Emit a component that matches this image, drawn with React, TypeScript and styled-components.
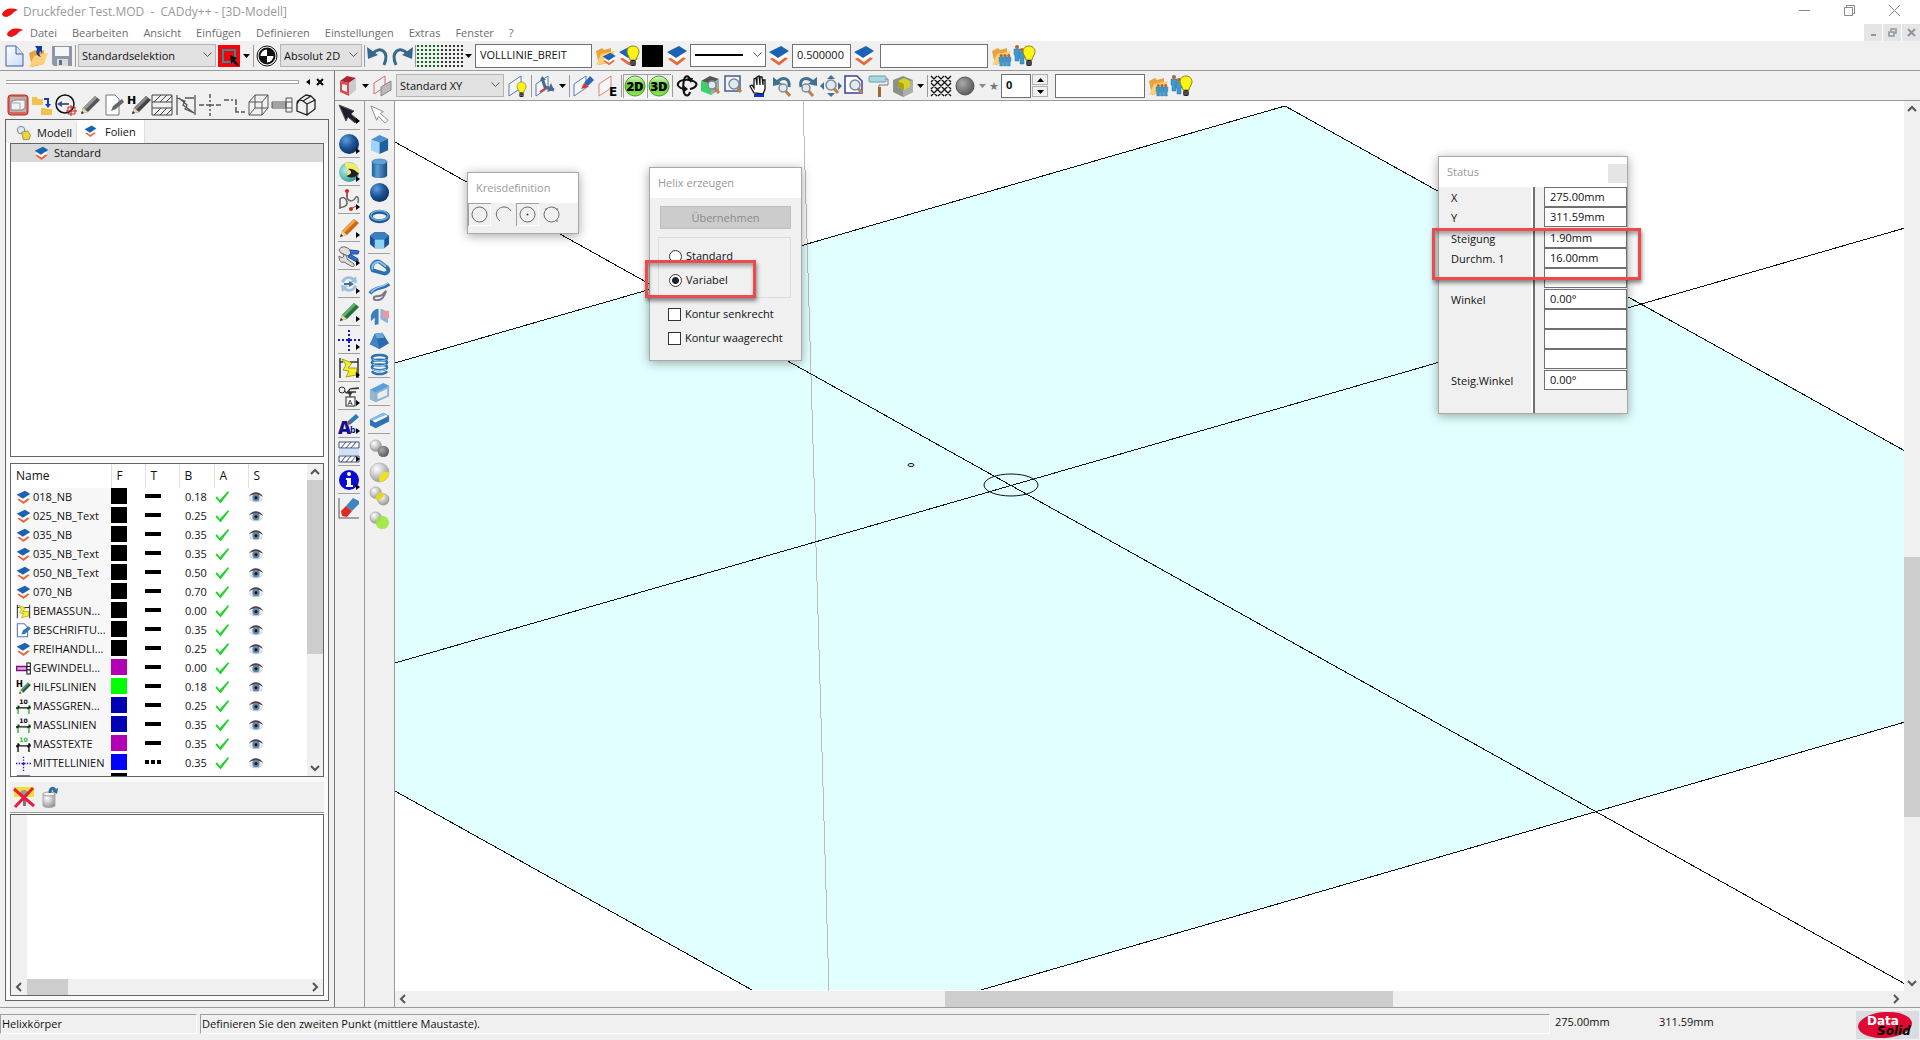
import React from 'react';
import styled, { createGlobalStyle, css } from 'styled-components';

const GlobalStyle = createGlobalStyle`
  * { box-sizing: border-box; }
  html, body { margin: 0; padding: 0; }
  body, button, input, select, table { font-family: 'Open Sans', 'Noto Sans', sans-serif; font-size: 11px; line-height: 16px; color: #111; }
  button { border: 0; padding: 0; background: none; }
  svg { display: block; flex: none; overflow: visible; }
`;

/* ---------- drawings ---------- */

const K = '#111';
const Layers = () => (
  <>
    <path d="M2 14 L7 11.500 L11 14 L15 11.500 L20 13.500 L11 20.500 Z" fill="#e8673c" />
    <path d="M2 11 L11 6 L20 10 L11 17 Z" fill="#fff" />
    <path d="M1 7 L13 1 L21 6 L10 13 Z" fill="#1c62b4" />
  </>
);
const Folder = () => (
  <>
    <path d="M2 6 L8 3 L10 5 L17 3 L17 17 L5 20 Z" fill="#e8a33c" />
    <path d="M2 20 L7 9 L21 6 L17 17 Z" fill="#fbd07a" />
  </>
);
const Bulb = ({ x = 0, y = 0 }: { x?: number; y?: number }) => (
  <g transform={`translate(${x} ${y})`}>
    <path d="M6 0 C1 0 0 4 0 6 C0 9 3 11 3 14 H9 C9 11 12 9 12 6 C12 4 11 0 6 0Z" fill="#fbf315" stroke="#8b8a10" />
    <rect x="3" y="14" width="6" height="6" rx="2" fill="#222" />
    <path d="M3 16H9M3 18H9" stroke="#999" strokeWidth=".7" />
  </g>
);
const People = ({ x = 0, y = 0 }: { x?: number; y?: number }) => (
  <g transform={`translate(${x} ${y})`}>
    <circle cx="3" cy="2" r="2" fill="#b5622e" />
    <path d="M0 4H6V10H5V16H1V10H0Z" fill="#4097cc" stroke="#2b77a8" strokeWidth=".5" />
  </g>
);
const Pencil = ({ c, d }: { c: string; d: string }) => (
  <>
    <path d="M2 20 L4 14 L16 2 L21 6 L9 18 Z" fill={c} />
    <path d="M4 14 L16 2 L18 4 L6 16Z" fill={d} />
    <path d="M2 20 L4 14 L9 18Z" fill="#e9d7b8" />
    <path d="M2 20 L3 17 L5 19Z" fill="#222" />
  </>
);
const Glass = ({ x = 0, y = 0, r = 5 }: { x?: number; y?: number; r?: number }) => (
  <g transform={`translate(${x} ${y})`}>
    <path d={`M${r} ${r} L${r + 7} ${r + 8}`} stroke="#b9824d" strokeWidth="3" />
    <circle cx={r} cy={r} r={r} fill="#dfe9f2" stroke="#7d8a96" strokeWidth="1.500" />
  </g>
);
const PlaneShape = ({ c = '#5a78b4' }: { c?: string }) => (
  <path d="M2 9 L14 1 V13 L2 21 Z" fill="#f8f8f8" stroke={c} />
);

const art: Record<string, React.ReactNode> = {
  newDoc: <><path d="M3 1H13L20 9V21H3Z" fill="url(#paper)" stroke="#3d5f9f" /><path d="M13 1V9H20" fill="#d5e4fb" stroke="#3d5f9f" /></>,
  open: <><g transform="translate(0 2)"><Folder /></g><path d="M8 1H15V8L13 6C12 8 12 10 14 12C10 11 8 8 10 4Z" fill="#123f9d" /></>,
  save: <><path d="M1 1H21V21H3L1 19Z" fill="#8e98a4" /><rect x="4" y="2" width="14" height="9" fill="#f4f6f8" /><rect x="6" y="14" width="11" height="7" fill="#d6dbe0" /><rect x="8" y="15" width="3" height="5" fill="#66707c" /></>,
  redSel: <><rect width="22" height="22" fill="#fb0007" /><rect x="5" y="5" width="12" height="12" fill="none" stroke="#2e8f93" strokeWidth="2" /><path d="M12 10L19 13L17 15L21 20L19 21L15 17L13 19Z" fill={K} /></>,
  origin: <><circle cx="11" cy="11" r="10" fill="#fff" stroke={K} /><circle cx="11" cy="11" r="7.500" fill="#fff" stroke={K} strokeWidth="2" /><path d="M11 11V3.500A7.500 7.500 0 0 1 18.500 11ZM11 11V18.500A7.500 7.500 0 0 1 3.500 11Z" fill={K} /></>,
  undo: <><path d="M6 8C13 1 23 6 17 20" fill="none" stroke="#36698c" strokeWidth="3" /><path d="M0 2L1 14L11 10Z" fill="#36698c" /></>,
  redo: <><path d="M16 8C9 1 -1 6 5 20" fill="none" stroke="#36698c" strokeWidth="3" /><path d="M22 2L21 14L11 10Z" fill="#36698c" /></>,
  layers: <Layers />,
  folderLayers: <><Folder /><g transform="translate(8 7) scale(.65)"><Layers /></g></>,
  layersBulb: <><Layers /><Bulb x={9} y={1} /></>,
  black: <rect x="0" y="0" width="21" height="22" fill="#000" />,
  folderPeople: <><Folder /><g transform="translate(9 9) scale(.75)"><People /><People x={5} /><People x={10} /></g></>,
  peopleBulb: <><People /><People x={5} y={3} /><Bulb x={9} y={1} /></>,

  redCube: <><path d="M3 6L10 1L19 3L12 8Z" fill="#b3222a" /><path d="M3 6L12 8V21L3 17Z" fill="#d84a50" /><path d="M5 9L10 10V17L5 15Z" fill="#eee" /><path d="M12 8L19 3V15L12 21Z" fill="#c9cccc" /></>,
  planes: <><path d="M2 8L13 1V12L2 19Z" fill="none" stroke="#d66" /><path d="M9 12L19 6V15L9 21Z" fill="#bbb" stroke="#888" /></>,
  planeBulb: <><PlaneShape /><g transform="translate(10 7) scale(.75)"><Bulb /></g></>,
  planeAxes: <><PlaneShape /><path d="M8 3L11 12L20 15" stroke="#456c8e" strokeWidth="3" fill="none" /><path d="M17 8L20 15L13 17ZM6 6L8 1L12 5Z" fill="#456c8e" /><path d="M12 13L6 17" stroke="#d33" strokeWidth="2" /></>,
  planePen: <><PlaneShape /><path d="M9 14L12 8L17 12Z" fill="#d33" /><path d="M12 8L18 1L22 5L16 11Z" fill="#2c63b5" /></>,
  planeE: <><PlaneShape c="#df8080" /><text x="12" y="21" fontSize="12" fontWeight="900" fontFamily="DejaVu Sans, sans-serif">E</text></>,
  b2d: <><circle cx="11" cy="11" r="10" fill="url(#green)" stroke="#4c9b28" /><text x="11" y="16" fontSize="13" fontWeight="800" textAnchor="middle" fontFamily="Open Sans, sans-serif">2D</text></>,
  b3d: <><circle cx="11" cy="11" r="10" fill="url(#green)" stroke="#4c9b28" /><text x="11" y="16" fontSize="13" fontWeight="800" textAnchor="middle" fontFamily="Open Sans, sans-serif">3D</text></>,
  orbit: <><path d="M14 14C20 13 22 9 19 7C15 4 6 4 3 7C0 10 3 13 8 14" fill="none" stroke={K} strokeWidth="2" /><path d="M14 5C13 0 9 0 8 5C7 10 7 15 8 18C10 22 13 21 14 17" fill="none" stroke={K} strokeWidth="2" /><path d="M7 10L12 14L7 18ZM11 3L17 3L15 8Z" fill={K} /></>,
  zoomCube: <><path d="M1 6L10 1L19 4L11 9Z" fill="#555" /><path d="M1 6L11 9V20L1 16Z" fill="#39d465" /><path d="M11 9L19 4V15L11 20Z" fill="#9aa" /><Glass x={8} y={6} r={4} /></>,
  zoomWin: <><rect x="1" y="1" width="15" height="15" fill="#f4f4f4" stroke="#445b94" strokeWidth="1.500" /><Glass x={5} y={4} r={5} /></>,
  hand: <><path d="M6 18L2 11L4 10L6 13V4L8 3L9 10V2L11 1L12 10V2L14 2L15 10V5L17 5V14L15 19Z" fill="#fff" stroke={K} strokeWidth="1.300" /><rect x="6" y="19" width="10" height="3" fill="#1033c8" /></>,
  zoomUndo: <><path d="M5 7C11 1 18 3 17 12" fill="none" stroke="#42718f" strokeWidth="3" /><path d="M1 2V11L10 9Z" fill="#42718f" /><Glass x={7} y={9} r={4} /></>,
  zoomRedo: <><path d="M17 7C11 1 3 3 5 12" fill="none" stroke="#42718f" strokeWidth="3" /><path d="M21 2V11L12 9Z" fill="#42718f" /><Glass x={6} y={9} r={4} /></>,
  zoomAll: <><path d="M11 0L15 4H7ZM11 22L7 18H15ZM0 11L4 7V15ZM22 11L18 7V15Z" fill="#42718f" /><Glass x={6} y={5} r={5} /></>,
  zoomPage: <><path d="M1 1H13L18 6V18H1Z" fill="#fff" stroke="#3b3f95" strokeWidth="1.500" /><Glass x={6} y={5} r={5} /></>,
  roller: <><rect x="1" y="1" width="17" height="6" rx="1" fill="#a7d9de" stroke="#6b9da5" /><path d="M18 4H20V10H11V13" fill="none" stroke="#777" /><path d="M10 12H13V22H10Z" fill="#9b6a3a" /></>,
  boxYellow: <><path d="M1 5L11 1L21 5V17L11 22L1 17Z" fill="#8b918b" /><path d="M11 9L21 5V17L11 22Z" fill="#aab0aa" /><path d="M6 6L12 3L18 6V12L12 15L6 12Z" fill="#d8d022" /><path d="M6 6L12 9V15L6 12Z" fill="#a9a31c" /></>,
  hatch: <><path d="M1 1L21 21M1 8L14 21M1 15L7 21M8 1L21 14M15 1L21 7M21 1L1 21M14 1L1 14M7 1L1 7M21 8L8 21M21 15L15 21" stroke={K} strokeWidth="1.300" /></>,
  graySphere: <circle cx="11" cy="11" r="9" fill="url(#grayBall)" stroke="#555" />,

  dRed: <><rect x="1" y="1" width="20" height="20" rx="3" fill="#d9655c" stroke="#b33028" /><rect x="3" y="3" width="16" height="15" fill="#bdb1af" /><path d="M4 8L8 6H18V14L15 16H4Z" fill="#f2f2f2" stroke="#888" /><path d="M4 9H13V16" fill="none" stroke="#aaa" /></>,
  dTree: <><path d="M1 3H6L7 5H12V11H1Z" fill="#efc34c" /><path d="M10 14H14L15 15H21V21H10Z" fill="#efc34c" /><path d="M13 5H17V11" fill="none" stroke="#1b35c8" strokeWidth="2" /><path d="M14 10H20L17 14Z" fill="#1b35c8" /></>,
  dCircle: <><circle cx="10" cy="10" r="9" fill="none" stroke={K} strokeWidth="1.500" /><path d="M3 10H14" stroke="#333" strokeWidth="1.500" /><path d="M2 10L7 7V13Z" fill="#2355b0" /><path d="M13 13H20V20H13ZM16 11V22M11 17H22" stroke="#c22" fill="none" /></>,
  dPencil: <Pencil c="#555" d="#999" />,
  dNote: <><path d="M3 1H12L16 5V21H3Z" fill="#fff" stroke="#777" /><path d="M8 17L10 12L19 5L21 8L13 15Z" fill="#666" /></>,
  dH: <><g transform="translate(3 0)"><Pencil c="#444" d="#888" /></g><text x="0" y="10" fontSize="11" fontWeight="900" fontFamily="DejaVu Sans, sans-serif">H</text></>,
  dHatch: <path d="M1 1H21V21H1ZM1 8H21M1 14H21M3 8L10 1M9 8L16 1M15 8L21 2M3 21L10 14M9 21L16 14M15 21L21 15" fill="none" stroke="#444" />,
  dBolt: <path d="M2 1V21M20 1V21M2 4L10 7L8 11L19 19M10 4H19M19 19L10 15L12 11L4 4" fill="none" stroke="#555" strokeWidth="1.300" />,
  dCross: <path d="M11 0V4M11 6V8M11 10V13M11 15V17M11 19V22M0 11H5M7 11H9M13 11H15M17 11H22M9 11H13" stroke="#555" strokeWidth="1.500" />,
  dDash: <path d="M1 6H6M8 6H10M12 6H13V11M13 13V18H16M18 18H22" fill="none" stroke="#555" strokeWidth="1.500" />,
  dBox: <path d="M2 8H15V21H2ZM8 1H21V14H8ZM2 8L8 1M15 8L21 1M2 21L8 14M15 21L21 14" fill="none" stroke="#555" />,
  dScrew: <path d="M1 8H15V14H1ZM15 4H21V18H15ZM15 8H21M15 14H21M1 10H15M1 12H15" fill="none" stroke="#555" />,
  dSolid: <path d="M2 10C2 5 6 6 8 7L12 10V21L2 17ZM12 10L20 6V15L12 21M8 7L16 2L20 6M5 5L11 1L16 2M2 10L5 5" fill="none" stroke="#222" strokeWidth="1.300" />,

  cursorDark: <path d="M1 2L16 8L13 11L20 17L17 20L10 14L8 18Z" fill="#1e1e2e" stroke="#555" />,
  cursorLight: <path d="M2 2L15 8L12 10L20 17L17 20L10 13L8 17Z" fill="#fff" stroke="#888" />,
  sphere: <circle cx="11" cy="11" r="10" fill="url(#blueBall)" />,
  sphere2: <><circle cx="11" cy="11" r="10" fill="url(#teal)" /><path d="M7 2C15 0 22 5 21 12C16 17 14 12 8 15C14 9 6 8 7 2Z" fill="#f2ea6a" /><path d="M8 15C15 13 14 10 10 8C17 7 18 12 21 12C17 18 12 17 8 15Z" fill="#222" /></>,
  curve: <><path d="M2 20V10C5 7 8 9 9 13C10 17 4 19 2 18M9 3V9C12 14 16 12 18 8C20 7 21 10 20 14" fill="none" stroke="#666" strokeWidth="1.500" /><path d="M9 2V8M13 20L18 17" stroke="#c22" /><circle cx="9" cy="2" r="2" fill="#d22" /><circle cx="13" cy="20" r="2" fill="#d22" /></>,
  pencilO: <Pencil c="#c96a10" d="#f3a44a" />,
  tools: <><path d="M1 5C3 1 7 1 11 4L14 8L10 11L3 8Z" fill="#ddd" stroke="#666" /><path d="M12 5L21 6L20 9L13 9ZM12 9L20 14L20 18L10 12Z" fill="#2e6fd1" stroke="#1d4a94" /><path d="M1 11L4 13L6 11L5 9C9 10 9 13 9 14L16 19C17 22 14 22 13 21L6 17C3 18 1 16 1 11Z" fill="#ddd" stroke="#666" /></>,
  rotate: <><path d="M3 9C5 3 12 2 16 5L18 3L19 10L12 9L14 7C10 5 7 6 6 10ZM19 13C17 19 10 20 6 17L4 19L3 12L10 13L8 15C12 17 15 16 16 12Z" fill="#9dbfdc" /><path d="M6 10H11V8L16 11L11 14V12H6Z" fill="#3f6f97" /></>,
  pencilG: <Pencil c="#23703a" d="#5fae6c" />,
  crossB: <path d="M11 1V3M11 5V7M11 9V14M11 16V18M11 20V22M0 11H2M4 11H6M8 11H14M16 11H18M20 11H22" stroke="#1818c8" strokeWidth="2" />,
  boltY: <><path d="M2 1V21M20 1V21M12 5H20M2 5H5" stroke="#333" fill="none" strokeWidth="1.500" /><path d="M4 2L14 6L10 11L19 11L18 18L8 20L11 14L5 13L8 8Z" fill="#f5ee20" stroke="#807c10" strokeWidth=".7" /></>,
  weld: <><path d="M6 6L9 8L12 4C14 3 16 4 21 3M12 7V12M9 7H18" fill="none" stroke="#333" strokeWidth="1.300" /><circle cx="4" cy="5" r="3" fill="none" stroke="#333" /><path d="M9 7H15L12 11Z" fill="#333" /><rect x="8" y="12" width="9" height="9" fill="#fff" stroke="#222" /><text x="12" y="20" fontSize="8" textAnchor="middle" fontFamily="Open Sans, sans-serif">A</text></>,
  textAb: <><text x="0" y="21" fontSize="18" fontWeight="800" fill="#12128c" fontFamily="Open Sans, sans-serif">A</text><text x="12" y="20" fontSize="9" fontWeight="700" fill="#12128c" fontFamily="Open Sans, sans-serif">b</text><path d="M9 12L10 8L18 1L21 4L13 11Z" fill="#2f79b5" /><path d="M9 12L10 8L13 11Z" fill="#d33" /></>,
  hatchB: <><rect x="1" y="1" width="20" height="20" fill="#fff" /><path d="M1 1H21V7H1ZM1 15H21V21H1ZM3 7L8 1M8 7L13 1M13 7L18 1M3 21L8 15M8 21L13 15M13 21L18 15" fill="none" stroke="#3c4a7a" /><path d="M1 8H21V14H1Z" fill="#cfe1f6" /></>,
  info: <><circle cx="11" cy="11" r="10" fill="#0a0ad2" /><circle cx="11" cy="5" r="2" fill="#fff" /><path d="M8 9H13V16H15V18H8V16H9V11H8Z" fill="#fff" /></>,
  eraser: <><path d="M1 1V21H21" stroke="#555" fill="none" /><path d="M3 14L8 9L14 14L9 20L4 19Z" fill="#e02a20" /><path d="M8 9L15 1L21 4V7L14 14Z" fill="#3e86c0" /></>,

  cube: <><path d="M2 6L11 1L20 5L11 9Z" fill="#4c92cf" /><path d="M2 6L11 9V21L2 17Z" fill="#9fd4f5" /><path d="M11 9L20 5V17L11 21Z" fill="#1e5f9f" /></>,
  cylinder: <><path d="M3 4V18C3 22 19 22 19 18V4Z" fill="url(#blueH)" /><ellipse cx="11" cy="4" rx="8" ry="3" fill="#5fa0d6" stroke="#2b659c" strokeWidth=".5" /></>,
  torus: <><ellipse cx="11" cy="11" rx="9" ry="5" fill="none" stroke="#1f5a98" strokeWidth="4" /><ellipse cx="11" cy="10" rx="9" ry="5" fill="none" stroke="#6fb0e3" strokeWidth="1.500" /></>,
  hexa: <><path d="M1 6L6 2H16L21 6V15L16 19H6L1 15Z" fill="#1c5590" /><path d="M1 6L6 2H16L21 6L16 10H6Z" fill="#3a7fbf" /><path d="M6 10H16V19H6Z" fill="#8fd2f4" /></>,
  loop: <><path d="M4 13C1 8 6 2 11 4L19 10C22 13 19 17 15 16Z" fill="none" stroke="#2c6fae" strokeWidth="4" /><path d="M4 12C2 8 6 3 11 4L18 9" fill="none" stroke="#8fc4ee" strokeWidth="2" /></>,
  pipe: <><path d="M1 12C7 4 14 8 21 2" fill="none" stroke="#2c6fae" strokeWidth="4" /><path d="M2 11C7 4 14 6 20 1" fill="none" stroke="#9accf0" strokeWidth="1.500" /><path d="M18 9C16 15 14 19 8 19C4 19 4 15 8 15C12 15 15 14 17 10" fill="none" stroke="#778" strokeWidth="2" /></>,
  revolve: <><path d="M2 10C4 4 8 3 10 3V19L6 20V12L2 16Z" fill="#3a7ebd" /><path d="M12 3C18 4 20 8 20 18L12 14Z" fill="#7eb7e6" /><rect x="14" y="5" width="7" height="8" fill="#e99aa0" /></>,
  loft: <><path d="M6 4L14 3L21 14L11 20L1 15Z" fill="#2c6bab" /><path d="M6 4L14 3L16 8L8 9Z" fill="#68a8de" /><path d="M8 9L11 20L1 15L6 4Z" fill="#4284c2" /></>,
  spring: <><g fill="none" stroke="#2c73b3" strokeWidth="2.500"><ellipse cx="11" cy="4" rx="8" ry="3" /><ellipse cx="11" cy="9" rx="8" ry="3" /><ellipse cx="11" cy="14" rx="8" ry="3" /><path d="M3 18C6 22 16 22 19 18" /></g><path d="M4 6C8 8 14 8 18 6M4 11C8 13 14 13 18 11M4 16C8 18 14 18 18 16" fill="none" stroke="#a9d4f4" /></>,
  shell: <><path d="M1 8L15 1L21 4V15L7 21L1 18Z" fill="#5c9fd8" /><path d="M7 11L21 4V15L7 21Z" fill="#8fb4d3" /><path d="M9 12L19 7V14L9 18Z" fill="#ececec" /><path d="M1 8L7 11V21L1 18Z" fill="#9bb7cf" /></>,
  slot: <><path d="M1 10L15 3L21 6V12L7 19L1 16Z" fill="#2c73b3" /><path d="M1 10L15 3L21 6L7 13Z" fill="#85bce8" /><path d="M4 11L18 5L19 7L6 13Z" fill="#f2f6fa" /></>,
  balls1: <><circle cx="7" cy="8" r="6" fill="url(#silver)" stroke="#888" strokeWidth=".5" /><circle cx="15" cy="14" r="6" fill="url(#grayBall)" /></>,
  balls2: <><circle cx="11" cy="11" r="10" fill="url(#silver)" stroke="#999" strokeWidth=".5" /><path d="M21 11A10 10 0 0 1 11 21C9 14 14 9 21 11Z" fill="#efe21d" /></>,
  balls3: <><circle cx="7" cy="7" r="6" fill="url(#silver)" stroke="#888" strokeWidth=".5" /><circle cx="15" cy="14" r="6" fill="url(#silver)" stroke="#888" strokeWidth=".5" /><ellipse cx="11" cy="11" rx="3" ry="5" transform="rotate(45 11 11)" fill="#e4d723" /></>,
  balls4: <><circle cx="7" cy="8" r="6" fill="url(#silver)" stroke="#888" strokeWidth=".5" /><circle cx="14" cy="13" r="7" fill="#9be83e" opacity=".9" /></>,

  model: <><Glass x={2} y={2} r={5} /><path d="M8 10L16 8L20 14L18 20H10Z" fill="#ecd92c" stroke="#777" /></>,
  dimG: <><path d="M3 9V22M19 9V22" stroke="#2bb52b" strokeWidth="2" /><path d="M0 13H22M1 15L5 10M17 15L21 10" stroke="#111" strokeWidth="1.500" /><text x="11" y="8" fontSize="9" fontWeight="700" textAnchor="middle" fontFamily="DejaVu Sans, sans-serif">10</text></>,
  dimT: <><path d="M3 9V22M19 9V22M0 13H22M1 15L5 10M17 15L21 10" stroke="#111" strokeWidth="2" /><text x="11" y="8" fontSize="9" fontWeight="700" fill="#2bb52b" textAnchor="middle" fontFamily="DejaVu Sans, sans-serif">10</text></>,
  note: <><path d="M2 1H12L17 6V20H2Z" fill="#fff" stroke="#5577bb" strokeWidth="1.500" /><path d="M8 17L10 11L18 5L22 8L13 16Z" fill="#2f79b5" /></>,
  thread: <><path d="M1 8H16V14H1Z" fill="#e9a6e9" stroke="#7c147c" strokeWidth="2" /><path d="M16 3H21V19H16ZM16 8H21M16 13H21" fill="#fff" stroke="#111" strokeWidth="1.500" /></>,
  helpH: <><g transform="translate(3 2) scale(.9)"><Pencil c="#225c3c" d="#5a9c74" /></g><text x="0" y="10" fontSize="12" fontWeight="900" fontFamily="DejaVu Sans, sans-serif">H</text></>,
  check: <path d="M2 12L4 10L8 15L19 3L21 4L9 20Z" fill="#22d32e" />,
  eye: <><path d="M1 12C5 5 17 5 21 12C16 19 6 19 1 12Z" fill="#e6eef5" /><path d="M1 11C5 2 17 3 21 11C16 7 6 6 1 11Z" fill="#5b3d45" /><circle cx="11" cy="12" r="5" fill="#5d84a3" /><circle cx="11" cy="12" r="2" fill="#111" /><path d="M2 14C8 19 14 19 20 14" fill="none" stroke="#aab6c2" /></>,
  clear: <><rect x="1" y="1" width="20" height="10" fill="#f1e12b" /><circle cx="11" cy="8" r="4" fill="#999" /><path d="M10 9H13V20H10Z" fill="#777" /><path d="M1 3L21 20M20 2L2 21" stroke="#ea1b3c" strokeWidth="3" /></>,
  trash: <><path d="M2 8H14V20C11 22 5 22 2 20Z" fill="url(#silver)" stroke="#aaa" /><ellipse cx="8" cy="8" rx="6" ry="2" fill="#f4f4f4" stroke="#999" /><path d="M9 7C9 2 12 1 14 4" fill="none" stroke="#2e6c9b" strokeWidth="3" /><path d="M11 5L17 2L16 8Z" fill="#2e6c9b" /></>,
  hatchS: <path d="M2 1H20V21H2ZM2 10L11 1M2 18L19 1" fill="none" stroke="#555" strokeWidth="1.500" />,
};

const Icon = ({ n, s = 22 }: { n: string; s?: number }) => (
  <svg width={s} height={s} viewBox="0 0 22 22" aria-hidden="true">{art[n]}</svg>
);

const Defs = () => (
  <defs>
    <linearGradient id="paper" x1="0" y1="0" x2="1" y2="1"><stop offset="0" stopColor="#fff" /><stop offset="1" stopColor="#c7dcf8" /></linearGradient>
    <linearGradient id="blueH"><stop offset="0" stopColor="#1d5c9c" /><stop offset=".35" stopColor="#5c9dd6" /><stop offset="1" stopColor="#164a82" /></linearGradient>
    <linearGradient id="green" x1="0" y1="0" x2="0" y2="1"><stop offset="0" stopColor="#e2f9d2" /><stop offset=".5" stopColor="#5dd02c" /><stop offset="1" stopColor="#8ee657" /></linearGradient>
    <radialGradient id="blueBall" cx=".35" cy=".3" r=".8"><stop offset="0" stopColor="#5d9ede" /><stop offset=".5" stopColor="#1c5597" /><stop offset="1" stopColor="#0a2a55" /></radialGradient>
    <radialGradient id="teal" cx=".35" cy=".4" r=".8"><stop offset="0" stopColor="#b5efe6" /><stop offset="1" stopColor="#158a80" /></radialGradient>
    <radialGradient id="grayBall" cx=".35" cy=".35" r=".8"><stop offset="0" stopColor="#aaa" /><stop offset="1" stopColor="#4d4d4d" /></radialGradient>
    <radialGradient id="silver" cx=".35" cy=".3" r=".8"><stop offset="0" stopColor="#fff" /><stop offset="1" stopColor="#8d8d8d" /></radialGradient>
  </defs>
);

/* ---------- frame ---------- */

const Shell = styled.div`
  display: flex; flex-direction: column; height: 100vh; background: #f0f0f0; overflow: hidden;
`;
const TitleBar = styled.header`
  display: flex; align-items: center; height: 24px; padding: 0 3px 0 2px; background: #fff; color: #999; white-space: pre;
`;
const TitleText = styled.span`flex: 1; padding-left: 5px; font-size: 12px;`;
const WindowButton = styled.button`
  width: 45px; height: 24px; padding: 0 0 4px; display: grid; place-items: center;
`;
const MenuBar = styled.nav`
  display: flex; align-items: center; height: 17px; padding-left: 7px; background: #fff; flex: none;
`;
const MenuList = styled.ul`
  display: flex; flex: 1; gap: 15px; margin: 0; padding: 0 0 0 7px; list-style: none;
`;
const MenuItem = styled.button`color: #6d6d6d;`;
const MdiButton = styled.button`
  width: 18px; height: 17px; margin-left: 1px; background: #e5e5e5; display: grid; place-items: center;
`;
const Toolbar = styled.div<{ $sub?: boolean }>`
  display: flex; align-items: center; height: 30px; padding-left: ${p => (p.$sub ? 1 : 2)}px; flex: none;
  border-bottom: 1px solid #9a9a9a; background: #f0f0f0;
`;
const ToolButton = styled.button<{ $on?: boolean; $w?: number }>`
  width: ${p => p.$w || 24}px; height: 24px; display: grid; place-items: center; flex: none;
  ${p => p.$on && css`box-shadow: inset 1px 1px #a0a0a0, inset -1px -1px #fff;`}
`;
const CaretButton = styled.button`
  width: 11px; height: 24px; display: grid; place-items: center; flex: none;
`;
const Sep = styled.span`width: 1px; height: 22px; margin: 0 1px; background: #9a9a9a; flex: none;`;
const Spacer = styled.span<{ $w: number }>`width: ${p => p.$w}px; flex: none;`;
const SelectBox = styled.span<{ $w: number; $white?: boolean }>`
  position: relative; width: ${p => p.$w}px; height: 23px; margin: 0 1px; flex: none;
  select {
    width: 100%; height: 100%; appearance: none; padding: 0 16px 0 3px; border-radius: 0; outline: 0;
    border: 1px solid ${p => (p.$white ? '#707070' : '#b4b4b4')}; background: ${p => (p.$white ? '#fff' : '#e1e1e1')};
  }
  svg { position: absolute; right: 4px; top: 8px; pointer-events: none; }
  svg + svg { right: auto; left: 5px; top: 10px; }
`;
const Field = styled.input<{ $w: number; $bold?: boolean }>`
  width: ${p => p.$w}px; height: 24px; margin: 0 1px; padding: 0 1px 2px 4px; border: 1px solid #707070; background: #fff;
  border-radius: 0; outline: 0; flex: none; font-weight: ${p => (p.$bold ? 700 : 400)};
`;
const Star = styled.span`width: 12px; text-align: center; color: #777; font-size: 11px;`;
const Spinner = styled.span`
  display: flex; flex-direction: column; gap: 1px; margin-right: 6px;
  button { width: 16px; height: 11px; border: 1px solid #b0b0b0; display: grid; place-items: center; }
`;

const Chevron = () => (
  <svg width="9" height="6" viewBox="0 0 9 6"><path d="M0.500 0.500L4.500 4.500L8.500 0.500" fill="none" stroke="#555" /></svg>
);
const Caret = ({ c = '#000', up = false }: { c?: string; up?: boolean }) => (
  <svg width="7" height="4" viewBox="0 0 7 4"><path d={up ? 'M0 4H7L3.500 0Z' : 'M0 0H7L3.500 4Z'} fill={c} /></svg>
);
const Drop = ({ label, c }: { label: string; c?: string }) => (
  <CaretButton aria-label={label}><Caret c={c} /></CaretButton>
);
const Tool = ({ n, label, on, w, s }: { n: string; label?: string; on?: boolean; w?: number; s?: number }) => (
  <ToolButton aria-label={label || n} $on={on} $w={w}><Icon n={n} s={s} /></ToolButton>
);
const Feather = () => (
  <svg width="16" height="9" viewBox="0 0 16 9" aria-hidden="true"><path d="M0 6C2 1 9 -1 16 2C13 3 12 4 11 5C9 8 7 7 5 9C2 9 0 8 0 6Z" fill="#ee1414" /></svg>
);
const dots = Array.from({ length: 72 }, (_, i) => [i % 12, Math.floor(i / 12)]);

/* ---------- body ---------- */

const Body = styled.div`display: flex; flex: 1; min-height: 0;`;
const Dock = styled.aside`
  width: 335px; flex: none; display: flex; flex-direction: column; padding: 0 5px 6px;
  border-right: 1px solid #7b7b7b; min-height: 0;
`;
const DockHead = styled.div`
  display: flex; align-items: center; height: 22px; gap: 7px; padding: 0 6px 0 1px;
`;
const Grip = styled.span`flex: 1; height: 4px; border: 1px solid #a5a5a5; border-width: 1px 1px 1px 0; background: #fff;`;
const DockTools = styled.div`display: flex; height: 26px; padding: 0 1px 3px;`;
const Frame = styled.div`
  flex: 1; min-height: 0; display: flex; flex-direction: column; border: 1px solid #646464; background: #fafafa;
`;
const Tabs = styled.div`display: flex; height: 23px; background: #f0f0f0; padding-left: 3px; align-items: flex-end; flex: none;`;
const Tab = styled.button<{ $on?: boolean }>`
  display: flex; align-items: center; height: ${p => (p.$on ? 23 : 20)}px; gap: ${p => (p.$on ? 8 : 5)}px; padding: 0 ${p => (p.$on ? 8 : 4)}px 0 7px;
  background: ${p => (p.$on ? '#fff' : 'transparent')}; border-right: 1px solid #ddd;
`;
const Tree = styled.div`
  flex: 315 1 0; margin: 0 4px; border: 1px solid #646464; background: #fff;
`;
const TreeRow = styled.div`
  display: flex; align-items: center; gap: 5px; height: 18px; padding-left: 23px; background: #d9d9d9;
`;
const ListBox = styled.div`
  flex: 315 1 0; min-height: 0; display: flex; margin: 6px 4px 0; border: 1px solid #646464; background: #fff; overflow: hidden;
`;
const ListScroll = styled.div`flex: 1; overflow: hidden;`;
const Table = styled.table`
  border-collapse: collapse; table-layout: fixed; width: 285px;
  th { height: 24px; padding: 0 0 0 5px; font-weight: 400; text-align: left; font-size: 12px; border-right: 1px solid #e2e2e2; }
  th:last-child { border-right: 0; }
  td { height: 19px; padding: 0; line-height: 16px; vertical-align: middle; }
`;
const NameCell = styled.span`
  display: flex; align-items: center; gap: 2px; height: 19px; margin-left: 5px; background: #f7f7f7; white-space: nowrap;
`;
const Swatch = styled.span<{ $c: string }>`display: block; width: 16px; height: 16px; margin-bottom: 3px; background: ${p => p.$c};`;
const Dash = styled.span<{ $dots?: boolean }>`
  display: block; width: 16px; height: 4px; margin-bottom: 3px;
  background: ${p => (p.$dots ? 'repeating-linear-gradient(90deg, #000 0 4px, #fff 4px 6px)' : '#000')};
`;
const Num = styled.span`padding-left: 6px;`;
const VBar = styled.div<{ $w: number }>`
  width: ${p => p.$w}px; flex: none; display: flex; flex-direction: column; background: #f0f0f0;
`;
const HBar = styled.div`height: 16px; flex: none; display: flex; background: #f0f0f0;`;
const Arrow = styled.button`width: 16px; height: 16px; display: grid; place-items: center; flex: none;`;
const Thumb = styled.span<{ $grow: number }>`flex: ${p => p.$grow} 1 0; background: #cdcdcd;`;
const Gap = styled.span<{ $grow: number }>`flex: ${p => p.$grow} 1 0;`;
const MiniBar = styled.div`
  display: flex; gap: 4px; height: 31px; margin: 5px 4px 0; padding: 2px; align-items: center; background: #f0f0f0;
  border-bottom: 1px solid #9a9a9a; flex: none;
`;
const Preview = styled.div`
  flex: 182 1 0; min-height: 0; display: flex; flex-direction: column; margin: 1px 4px 4px; border: 1px solid #646464; background: #fff;
`;
const PreviewArea = styled.div`flex: 1; border-left: 16px solid #f0f0f0;`;

const Main = styled.div`flex: 1; min-width: 0; display: flex; flex-direction: column;`;
const Work = styled.div`flex: 1; min-height: 0; display: flex;`;
const Column = styled.div`
  width: 30px; flex: none; display: flex; flex-direction: column; align-items: center; padding: 1px 1px 0 0; border-right: 1px solid #9a9a9a;
`;
const SideGroup = styled.div`
  display: flex; flex-direction: column; padding: 0 0 3px; border-bottom: 1px solid #a0a0a0;
  &:last-child { border-bottom: 0; }
  &:not(:first-child) { padding: 2px 0 1px; }
`;
const SideButton = styled.button`
  position: relative; width: 22px; height: 24px; display: grid; place-items: center;
`;
const Corner = styled.svg`position: absolute; right: 0; bottom: 2px;`;
const View = styled.div`flex: 1; min-width: 0; display: flex; flex-direction: column;`;
const ViewRow = styled.div`flex: 1; min-height: 0; display: flex;`;
const Canvas = styled.main`position: relative; flex: 1; min-width: 0; background: #fff; overflow: hidden;`;
const Drawing = styled.svg`width: 100%; height: 100%;`;

/* ---------- floating windows ---------- */

const Floating = styled.section<{ $x: number; $y: number; $w: number }>`
  position: absolute; left: ${p => p.$x}px; top: ${p => p.$y}px; width: ${p => p.$w}px;
  background: #f0f0f0; border: 1px solid #a8a8a8; box-shadow: 0 2px 10px rgba(0, 0, 0, .35);
`;
const FloatTitle = styled.h2`
  display: flex; align-items: center; justify-content: space-between; height: 30px; margin: 0; padding: 0 0 0 8px;
  background: #fff; color: #999; font-size: 11px; font-weight: 400;
`;
const FloatClose = styled.button`width: 19px; height: 19px; background: #e5e5e5; margin-top: 3px;`;
const RoundTools = styled.div`display: flex; gap: 1px; height: 30px;`;
const RoundTool = styled.button<{ $on?: boolean }>`
  width: 23px; height: 23px; display: grid; place-items: center;
  ${p => p.$on && css`box-shadow: inset 1px 1px #a0a0a0, inset -1px -1px #fff;`}
`;
const HelixForm = styled.form`display: flex; flex-direction: column; padding: 8px 10px 10px 8px;`;
const Apply = styled.button`height: 23px; margin: 0 0 8px 2px; background: #ccc; border: 1px solid #bfbfbf; color: #8a8a8a;`;
const Group = styled.fieldset`
  margin: 0 0 4px; padding: 6px 0 5px 10px; border: 1px solid #dcdcdc; display: flex; flex-direction: column;
`;
const Choice = styled.label<{ $inset?: boolean }>`
  display: flex; align-items: center; gap: 4px; height: 24px; padding-left: ${p => (p.$inset ? 10 : 0)}px;
  input {
    appearance: none; width: 13px; height: 13px; margin: 0; border: 1px solid #333; background: #fff; flex: none;
  }
  input[type='radio'] { border-radius: 50%; }
  input[type='radio']:checked { background: radial-gradient(circle, #222 0 3px, #fff 4px); }
`;
const Status = styled.div`
  display: grid; grid-template-columns: 96px 1fr; height: 226px;
`;
const StatusLabels = styled.div`border-right: 2px solid #707070; padding: 0 0 0 12px; box-shadow: inset -2px 0 #fff;`;
const StatusValues = styled.div`padding-left: 9px;`;
const StatusCell = styled.div<{ $gap?: boolean }>`height: 20px; margin-top: ${p => (p.$gap ? 1 : 0)}px;`;
const StatusLabel = styled.label<{ $gap?: boolean }>`
  display: flex; align-items: center; height: 20px; margin-top: ${p => (p.$gap ? 1 : 0)}px; padding-top: 2px;
`;
const StatusInput = styled.input`
  display: block; width: 100%; height: 20px; padding: 0 5px 1px; border: 1px solid #707070; border-radius: 0; background: #fff; outline: 0;
`;
const Mark = styled.div<{ $x: number; $y: number; $w: number; $h: number }>`
  position: absolute; left: ${p => p.$x}px; top: ${p => p.$y}px; width: ${p => p.$w}px; height: ${p => p.$h}px;
  border: 3px solid #ec4a4c; box-shadow: 1px 3px 4px rgba(0, 0, 0, .45), inset 1px 3px 4px rgba(0, 0, 0, .35); pointer-events: none;
`;

/* ---------- status bar ---------- */

const Footer = styled.footer`
  display: flex; align-items: flex-start; height: 33px; padding-top: 6px; gap: 3px; border-top: 1px solid #9a9a9a; flex: none;
`;
const Pane = styled.div<{ $w?: number }>`
  height: 20px; padding: 1px 1px 0; border: 1px solid #a0a0a0; border-right-color: #fff; border-bottom-color: #fff;
  ${p => (p.$w ? css`width: ${p.$w}px;` : css`flex: 1;`)}
`;
const Coord = styled.span`width: 101px; padding-left: 2px;`;
const Logo = styled.svg`margin: -3px 1px 0 95px;`;

const rows: [string, string, string, string, boolean?][] = [
  ['layers', '018_NB', '#000', '0.18'],
  ['layers', '025_NB_Text', '#000', '0.25'],
  ['layers', '035_NB', '#000', '0.35'],
  ['layers', '035_NB_Text', '#000', '0.35'],
  ['layers', '050_NB_Text', '#000', '0.50'],
  ['layers', '070_NB', '#000', '0.70'],
  ['boltY', 'BEMASSUN...', '#000', '0.00'],
  ['note', 'BESCHRIFTU...', '#000', '0.35'],
  ['layers', 'FREIHANDLI...', '#000', '0.25'],
  ['thread', 'GEWINDELI...', '#b400b4', '0.00'],
  ['helpH', 'HILFSLINIEN', '#00ff00', '0.18'],
  ['dimG', 'MASSGREN...', '#0000b4', '0.25'],
  ['dimG', 'MASSLINIEN', '#0000b4', '0.35'],
  ['dimT', 'MASSTEXTE', '#b400b4', '0.35'],
  ['crossB', 'MITTELLINIEN', '#0000ff', '0.35', true],
  ['hatchS', '', '#000', ''],
];

const dockTools = ['dRed', 'dTree', 'dCircle', 'dPencil', 'dNote', 'dH', 'dHatch', 'dBolt', 'dCross', 'dDash', 'dBox', 'dScrew', 'dSolid'];
const leftTools = ['cursorDark', 'sphere', 'sphere2', 'curve', 'pencilO', 'tools', 'rotate', 'pencilG', 'crossB', 'boltY', 'weld', 'textAb', 'hatchB', 'info', 'eraser'];
const rightGroups = [
  ['cursorLight'],
  ['cube', 'cylinder', 'sphere', 'torus', 'hexa'],
  ['loop', 'pipe', 'revolve', 'loft', 'spring'],
  ['shell'],
  ['slot'],
  ['balls1', 'balls2', 'balls3', 'balls4'],
];
const statusRows: [string, string, boolean?][] = [
  ['X', '275.00mm'], ['Y', '311.59mm'], ['Steigung', '1.90mm', true], ['Durchm. 1', '16.00mm'], ['', ''],
  ['Winkel', '0.00°', true], ['', ''], ['', ''], ['', ''], ['Steig.Winkel', '0.00°', true],
];
const menus = ['Datei', 'Bearbeiten', 'Ansicht', 'Einfügen', 'Definieren', 'Einstellungen', 'Extras', 'Fenster', '?'];

const arrowPaths = { up: 'M1 7L5 3L9 7', down: 'M1 3L5 7L9 3', left: 'M7 1L3 5L7 9', right: 'M3 1L7 5L3 9' };
const ScrollArrow = ({ dir }: { dir: keyof typeof arrowPaths }) => (
  <Arrow aria-label={dir}>
    <svg width="10" height="10" viewBox="0 0 10 10"><path d={arrowPaths[dir]} fill="none" stroke="#555" strokeWidth="2" /></svg>
  </Arrow>
);

const TopToolbar = () => (
  <Toolbar>
    <Tool n="newDoc" /><Tool n="open" /><Tool n="save" /><Sep />
    <SelectBox $w={138}><select aria-label="Selektion"><option>Standardselektion</option></select><Chevron /></SelectBox>
    <Tool n="redSel" /><Drop label="Auswahl" /><Sep />
    <Tool n="origin" />
    <SelectBox $w={82}><select aria-label="Koordinaten"><option>Absolut 2D</option></select><Chevron /></SelectBox>
    <Sep /><Tool n="undo" /><Tool n="redo" /><Sep />
    <ToolButton aria-label="Raster" $w={46}>
      <svg width="46" height="22" viewBox="0 0 46 22">
        {dots.map(([c, r]) => <rect key={`${c}-${r}`} x={c * 4} y={r * 4} width="2" height="2" fill={c < 6 ? '#0a6a1a' : '#333'} />)}
      </svg>
    </ToolButton>
    <Drop label="Rasterwahl" />
    <Field $w={117} aria-label="Linie" defaultValue="VOLLLINIE_BREIT" />
    <Tool n="folderLayers" /><Tool n="layersBulb" /><Tool n="black" /><Tool n="layers" />
    <SelectBox $w={76} $white>
      <select aria-label="Linientyp"><option> </option></select><Chevron />
      <svg width="48" height="3"><rect width="48" height="2" fill="#000" /></svg>
    </SelectBox>
    <Tool n="layers" />
    <Field $w={59} aria-label="Breite" defaultValue="0.500000" />
    <Tool n="layers" /><Spacer $w={3} />
    <Field $w={108} aria-label="Gruppe" />
    <Tool n="folderPeople" /><Tool n="peopleBulb" />
  </Toolbar>
);

const ViewToolbar = () => (
  <Toolbar $sub>
    <Tool n="redCube" /><Drop label="Körper" /><Tool n="planes" />
    <SelectBox $w={108}><select aria-label="Ebene"><option>Standard XY</option></select><Chevron /></SelectBox>
    <Spacer $w={1} /><Tool n="planeBulb" /><Sep /><Tool n="planeAxes" /><Drop label="Achsen" /><Sep />
    <Tool n="planePen" /><Spacer $w={1} /><Tool n="planeE" /><Sep />
    <Tool n="b2d" on /><Tool n="b3d" on /><Sep /><Spacer $w={1} />
    <Tool n="orbit" /><Tool n="zoomCube" /><Tool n="zoomWin" /><Tool n="hand" /><Tool n="zoomUndo" /><Tool n="zoomRedo" />
    <Tool n="zoomAll" /><Tool n="zoomPage" /><Tool n="roller" /><Tool n="boxYellow" /><Drop label="Darstellung" /><Sep />
    <Tool n="hatch" /><Tool n="graySphere" /><Drop label="Material" c="#888" /><Star>★</Star>
    <Field $w={30} $bold aria-label="Stufe" defaultValue="0" />
    <Spinner><button aria-label="mehr"><Caret up /></button><button aria-label="weniger"><Caret /></button></Spinner>
    <Field $w={90} aria-label="Ansicht" />
    <Tool n="folderPeople" /><Tool n="peopleBulb" />
  </Toolbar>
);

const LayerList = () => (
  <ListBox>
    <ListScroll>
      <Table>
        <colgroup><col width="100" /><col width="34" /><col width="34" /><col width="35" /><col width="34" /><col width="48" /></colgroup>
        <thead><tr>{['Name', 'F', 'T', 'B', 'A', 'S'].map(h => <th key={h}>{h}</th>)}</tr></thead>
        <tbody>
          {rows.map(([ic, name, c, b, d], i) => (
            <tr key={i}>
              <td><NameCell><Icon n={ic} s={15} />{name}</NameCell></td>
              <td><Swatch $c={c} /></td>
              <td><Dash $dots={d} /></td>
              <td><Num>{b}</Num></td>
              <td><Icon n="check" s={16} /></td>
              <td><Icon n="eye" s={16} /></td>
            </tr>
          ))}
        </tbody>
      </Table>
    </ListScroll>
    <VBar $w={16}><ScrollArrow dir="up" /><Thumb $grow={174} /><Gap $grow={106} /><ScrollArrow dir="down" /></VBar>
  </ListBox>
);

export default function App() {
  return (
    <Shell>
      <GlobalStyle />
      <TitleBar>
        <Feather />
        <TitleText>{'Druckfeder Test.MOD  -  CADdy++ - [3D-Modell]'}</TitleText>
        <WindowButton aria-label="Minimieren"><svg width="11" height="11"><path d="M0 5.500H11" stroke="#888" /></svg></WindowButton>
        <WindowButton aria-label="Wiederherstellen"><svg width="11" height="11"><path d="M.5 2.500H8.500V10.500H.5ZM2.500 2.500V.5H10.500V8.500H8.500" fill="none" stroke="#888" /></svg></WindowButton>
        <WindowButton aria-label="Schließen"><svg width="11" height="11"><path d="M0 0L11 11M11 0L0 11" stroke="#888" /></svg></WindowButton>
      </TitleBar>
      <MenuBar>
        <Feather />
        <MenuList>{menus.map(m => <li key={m}><MenuItem>{m}</MenuItem></li>)}</MenuList>
        <MdiButton aria-label="Fenster minimieren"><svg width="9" height="9"><rect x="2" y="6" width="5" height="2" fill="#8a96a3" /></svg></MdiButton>
        <MdiButton aria-label="Fenster wiederherstellen"><svg width="9" height="9"><path d="M1 4H6V8H1ZM3 3V1H8V5H7" fill="none" stroke="#8a96a3" strokeWidth="1.500" /></svg></MdiButton>
        <MdiButton aria-label="Fenster schließen"><svg width="9" height="9"><path d="M1 1L8 8M8 1L1 8" stroke="#8a96a3" strokeWidth="2" /></svg></MdiButton>
      </MenuBar>
      <TopToolbar />
      <Body>
        <Dock>
          <DockHead>
            <Grip />
            <svg width="4" height="6"><path d="M4 0V6L0 3Z" /></svg>
            <svg width="6" height="6"><path d="M0 0L6 6M6 0L0 6" stroke="#000" strokeWidth="2" /></svg>
          </DockHead>
          <DockTools>{dockTools.map(n => <Tool key={n} n={n} />)}</DockTools>
          <Frame>
            <Tabs role="tablist">
              <Tab role="tab"><Icon n="model" s={16} />Modell</Tab>
              <Tab role="tab" $on><Icon n="layers" s={13} />Folien</Tab>
            </Tabs>
            <Tree><TreeRow><Icon n="layers" s={15} />Standard</TreeRow></Tree>
            <LayerList />
            <MiniBar><Tool n="clear" /><Tool n="trash" /></MiniBar>
            <Preview>
              <PreviewArea />
              <HBar><ScrollArrow dir="left" /><Thumb $grow={41} /><Gap $grow={238} /><ScrollArrow dir="right" /></HBar>
            </Preview>
          </Frame>
        </Dock>
        <Main>
          <ViewToolbar />
          <Work>
            <Column>
              {leftTools.map((n, i) => (
                <SideGroup key={n}>
                  <SideButton aria-label={n}>
                    <Icon n={n} />
                    {i < 14 && <Corner width="4" height="6"><path d="M0 0L4 3L0 6Z" /></Corner>}
                  </SideButton>
                </SideGroup>
              ))}
            </Column>
            <Column>
              {rightGroups.map(g => (
                <SideGroup key={g[0]}>
                  {g.map(n => <SideButton key={n} aria-label={n}><Icon n={n} s={21} /></SideButton>)}
                </SideGroup>
              ))}
            </Column>
            <View>
              <ViewRow>
                <Canvas>
                  <Drawing>
                    <Defs />
                    <path d="M890 5L1510 350V621L586 889H357L0 690V262Z" fill="#e2ffff" />
                    <path d="M408 0L434 890" stroke="#bcbcbc" shapeRendering="crispEdges" />
                    <path d="M0 262L890 5L1510 350M0 690L357 889M586 889L1510 621M0 41L1510 883M0 562L1510 127" fill="none" stroke="#111" shapeRendering="crispEdges" />
                    <ellipse cx="616" cy="384" rx="27" ry="11" fill="none" stroke="#111" />
                    <ellipse cx="516" cy="364" rx="3" ry="1.500" fill="none" stroke="#111" />
                  </Drawing>

                  <Floating $x={72} $y={71} $w={112}>
                    <FloatTitle>Kreisdefinition</FloatTitle>
                    <RoundTools>
                      {[0, 1, 2, 3].map(i => (
                        <RoundTool key={i} aria-label={`Kreis ${i + 1}`} $on={i % 2 === 0}>
                          <svg width="17" height="17" viewBox="0 0 17 17" fill="none" stroke="#666">
                            {i === 1 ? <path d="M5 15C-2 9 2 1 9 1C12 1 14 2 16 5" /> : <circle cx="8.500" cy="8.500" r="7.500" />}
                            {i === 2 && <circle cx="8.500" cy="8.500" r="1" fill="#444" stroke="none" />}
                            {i === 3 && <path d="M2 3H4M13 3H15M13 15H15" />}
                          </svg>
                        </RoundTool>
                      ))}
                    </RoundTools>
                  </Floating>

                  <Floating $x={254} $y={66} $w={153}>
                    <FloatTitle>Helix erzeugen</FloatTitle>
                    <HelixForm>
                      <Apply type="button" disabled>Übernehmen</Apply>
                      <Group>
                        <Choice><input type="radio" name="helix" />Standard</Choice>
                        <Choice><input type="radio" name="helix" defaultChecked />Variabel</Choice>
                      </Group>
                      <Choice $inset><input type="checkbox" />Kontur senkrecht</Choice>
                      <Choice $inset><input type="checkbox" />Kontur waagerecht</Choice>
                    </HelixForm>
                  </Floating>
                  <Mark $x={250} $y={159} $w={111} $h={38} />

                  <Floating $x={1043} $y={55} $w={190}>
                    <FloatTitle>Status<FloatClose aria-label="Schließen" /></FloatTitle>
                    <Status>
                      <StatusLabels>
                        {statusRows.map(([l, , g], i) => <StatusLabel key={i} htmlFor={`status-${i}`} $gap={g}>{l}</StatusLabel>)}
                      </StatusLabels>
                      <StatusValues>
                        {statusRows.map(([, v, g], i) => (
                          <StatusCell key={i} $gap={g}><StatusInput id={`status-${i}`} defaultValue={v} /></StatusCell>
                        ))}
                      </StatusValues>
                    </Status>
                  </Floating>
                  <Mark $x={1037} $y={127} $w={209} $h={52} />
                </Canvas>
                <VBar $w={16}><ScrollArrow dir="up" /><Gap $grow={440} /><Thumb $grow={260} /><Gap $grow={158} /><ScrollArrow dir="down" /></VBar>
              </ViewRow>
              <HBar><ScrollArrow dir="left" /><Gap $grow={534} /><Thumb $grow={449} /><Gap $grow={495} /><ScrollArrow dir="right" /><Spacer $w={16} /></HBar>
            </View>
          </Work>
        </Main>
      </Body>
      <Footer>
        <Pane $w={197}>Helixkörper</Pane>
        <Pane>Definieren Sie den zweiten Punkt (mittlere Maustaste).</Pane>
        <Coord>275.00mm</Coord>
        <Coord>311.59mm</Coord>
        <Logo width="63" height="28" viewBox="0 0 63 28">
          <rect width="63" height="28" fill="#d9dde2" />
          <ellipse cx="29" cy="14" rx="27" ry="13" fill="#df0a33" transform="rotate(-4 29 14)" />
          <text x="11" y="14" fontSize="12" fontWeight="700" fill="#fff" fontFamily="DejaVu Sans, sans-serif">Data</text>
          <text x="21" y="24" fontSize="12" fontWeight="700" fontStyle="italic" fontFamily="DejaVu Sans, sans-serif">Solid</text>
        </Logo>
      </Footer>
    </Shell>
  );
}
